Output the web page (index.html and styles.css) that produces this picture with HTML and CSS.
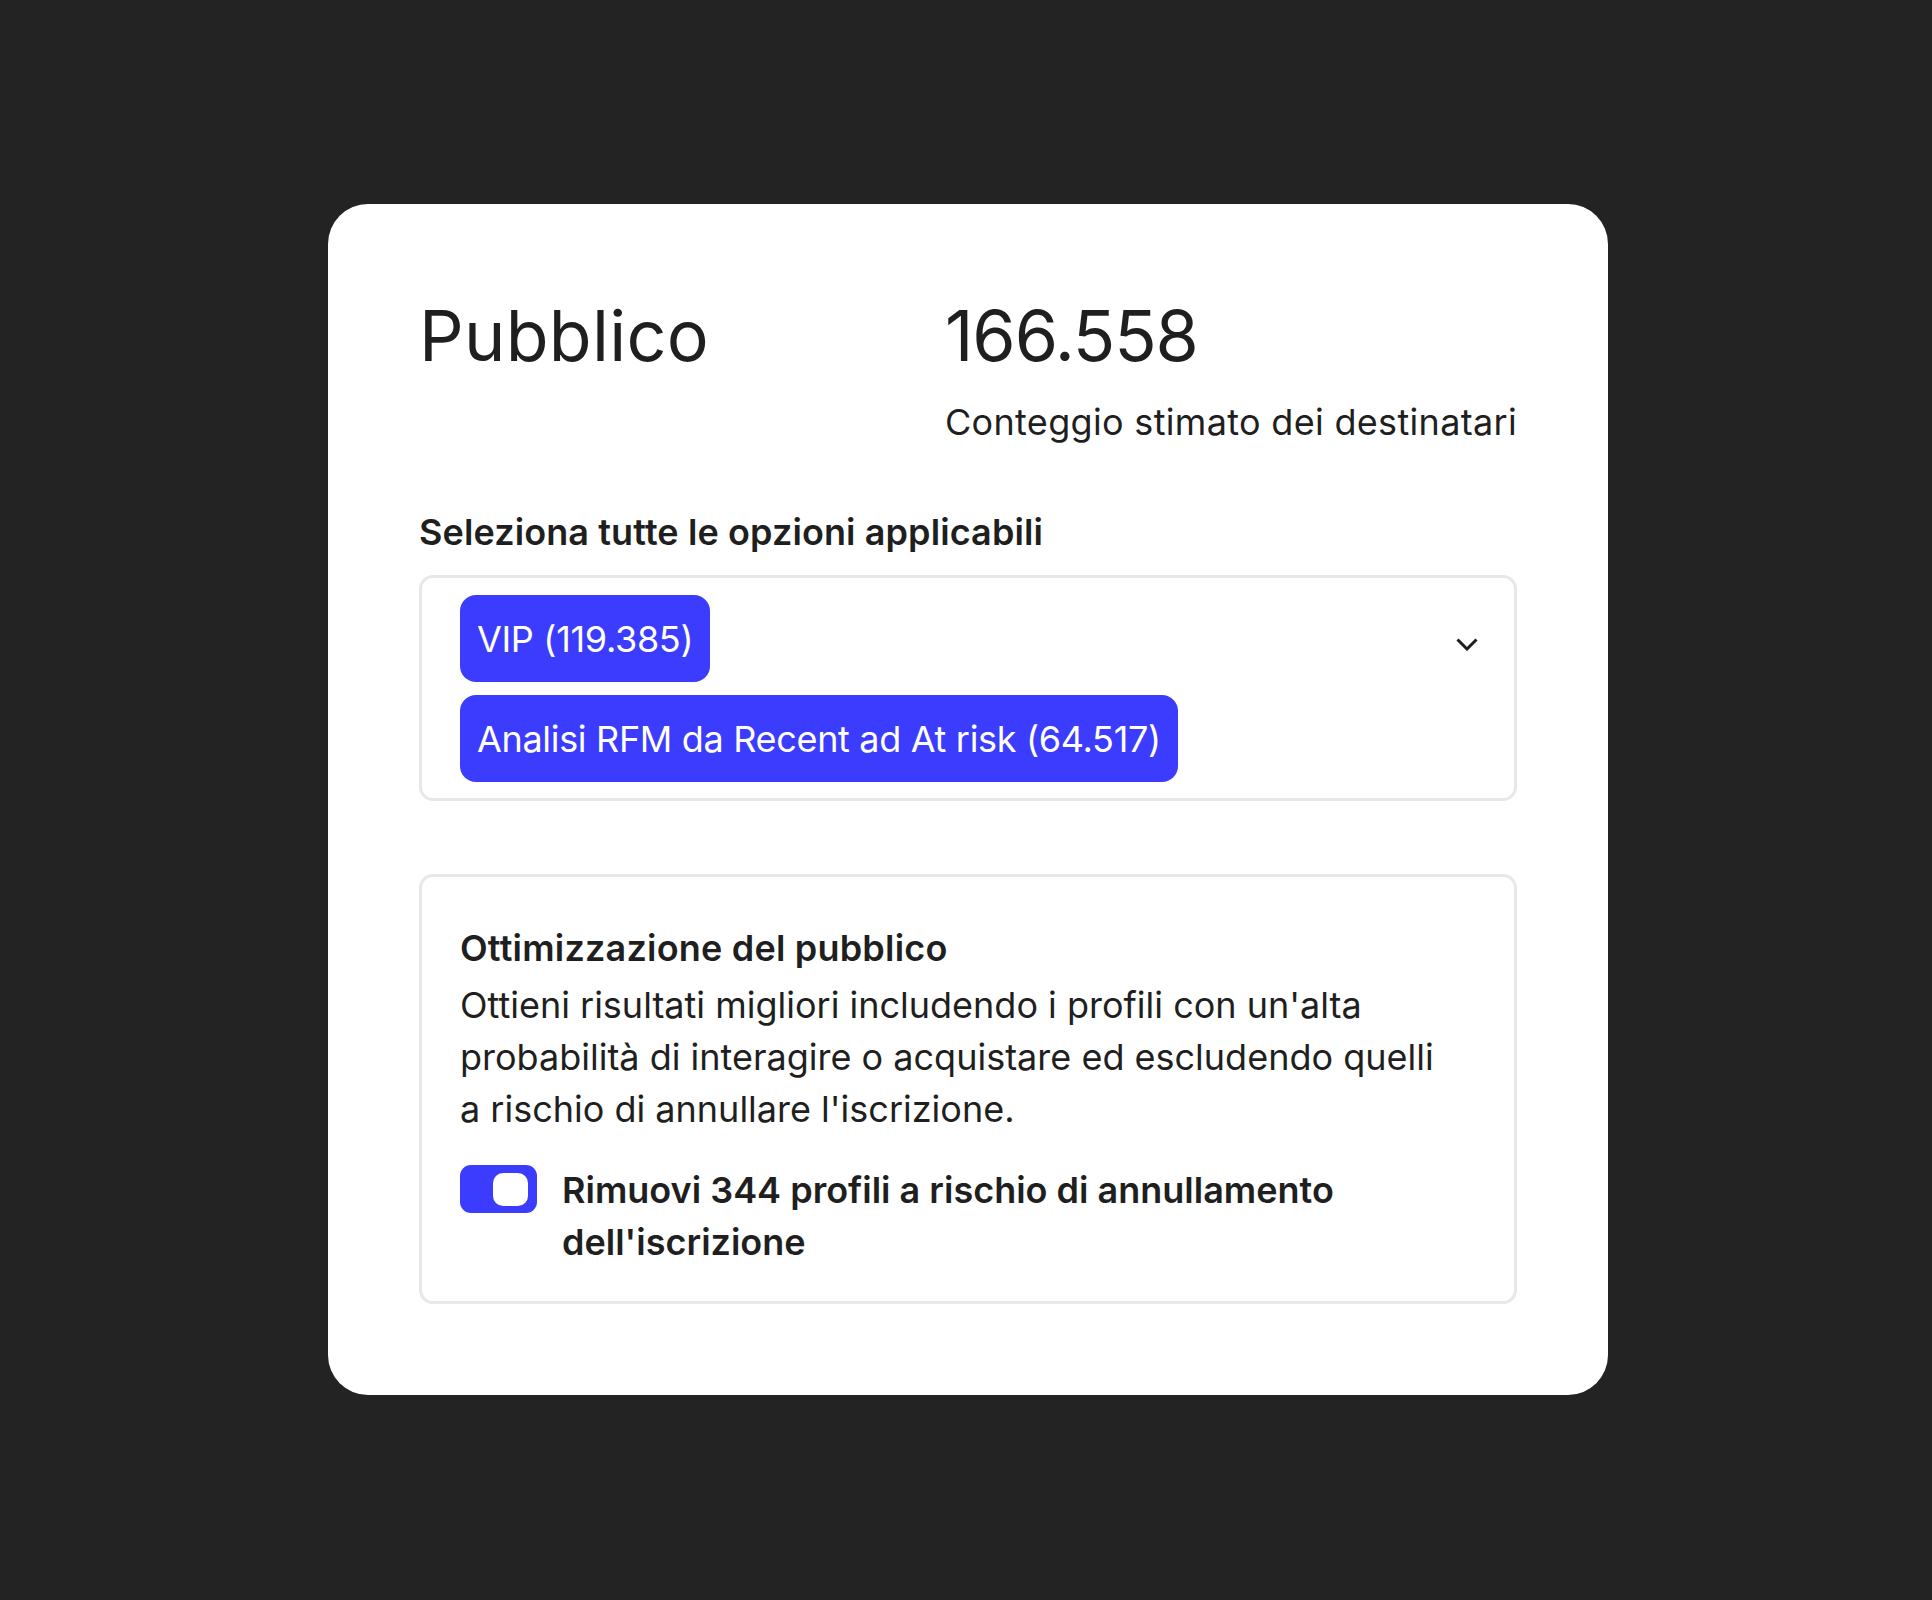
FILE: index.html
```html
<!DOCTYPE html>
<html lang="it">

<head>
	<meta charset="UTF-8">
	<title>Pubblico</title>
	<link rel="stylesheet" href="styles.css">
</head>

<body>
	<div class="card">
		<div class="header">
			<h1 class="title">Pubblico</h1>
			<div class="count">
				<div class="count-value">166.558</div>
				<div class="count-label">Conteggio stimato dei destinatari</div>
			</div>
		</div>

		<div class="field-label">Seleziona tutte le opzioni applicabili</div>
		<div class="select-box">
			<div class="chips">
				<span class="chip">VIP (119.385)</span>
				<span class="chip">Analisi RFM da Recent ad At risk (64.517)</span>
			</div>
			<svg class="chevron" width="22" height="13" viewBox="0 0 22 13">
				<path d="M1.5 1.5 L11 11 L20.5 1.5" fill="none" stroke="#1f1f1f" stroke-width="3" />
			</svg>
		</div>

		<div class="optimize">
			<div class="optimize-title">Ottimizzazione del pubblico</div>
			<p class="optimize-text">Ottieni risultati migliori includendo i profili con un'alta probabilità di interagire o acquistare ed escludendo quelli a rischio di annullare l'iscrizione.</p>
			<div class="toggle-row">
				<span class="toggle"><span class="knob"></span></span>
				<span class="toggle-label">Rimuovi 344 profili a rischio di annullamento dell'iscrizione</span>
			</div>
		</div>
	</div>
</body>

</html>
```

FILE: styles.css
```css
body {
	margin: 0;
	padding: 204px 0 0 4px;
	background-color: #232323;
	font-family: Inter, "Noto Sans", sans-serif;
	color: #1f1f1f;
}

.card {
	box-sizing: border-box;
	width: 1280px;
	height: 1191px;
	margin: 0 auto;
	padding: 90px 91px;
	background-color: #fff;
	border-radius: 40px;
}

.header {
	display: flex;
	justify-content: space-between;
	align-items: flex-start;
}

.title,
.count-value {
	margin: 0;
	font-size: 70px;
	font-weight: 400;
	line-height: 84px;
}

.title {
	letter-spacing: 0.3px;
}

.count-value {
	letter-spacing: -1.1px;
}

.count-label {
	margin-top: 22px;
	font-size: 36px;
	line-height: 44px;
	letter-spacing: 0.32px;
}

.field-label {
	margin-top: 66px;
	font-size: 36px;
	font-weight: 600;
	line-height: 44px;
	letter-spacing: 0.1px;
}

.select-box {
	display: flex;
	justify-content: space-between;
	align-items: flex-start;
	margin-top: 21px;
	padding: 17px 36px 16px 38px;
	border: 3px solid #e8e8e8;
	border-radius: 14px;
}

.chips {
	display: flex;
	flex-direction: column;
	align-items: flex-start;
	gap: 13px;
}

.chip {
	display: flex;
	align-items: center;
	height: 87px;
	padding: 0 17px;
	background-color: #3c3cff;
	color: #fff;
	border-radius: 16px;
	font-size: 36px;
	letter-spacing: -0.32px;
}

.chevron {
	margin-top: 43px;
}

.optimize {
	margin-top: 73px;
	padding: 45px 38px 33px;
	border: 3px solid #e8e8e8;
	border-radius: 14px;
}

.optimize-title {
	font-size: 36px;
	font-weight: 600;
	line-height: 52px;
	letter-spacing: 0.2px;
}

.optimize-text {
	margin: 5px 0 0;
	max-width: 990px;
	font-size: 36px;
	line-height: 52px;
}

.toggle-row {
	display: flex;
	align-items: flex-start;
	gap: 25px;
	margin-top: 29px;
}

.toggle {
	box-sizing: border-box;
	display: flex;
	justify-content: flex-end;
	align-items: center;
	flex: none;
	width: 77px;
	height: 48px;
	margin-top: 1px;
	padding: 0 9px;
	background-color: #3c3cff;
	border-radius: 11px;
}

.knob {
	width: 35px;
	height: 33px;
	background-color: #fff;
	border-radius: 10px;
}

.toggle-label {
	font-size: 36px;
	font-weight: 600;
	line-height: 52px;
}
```
